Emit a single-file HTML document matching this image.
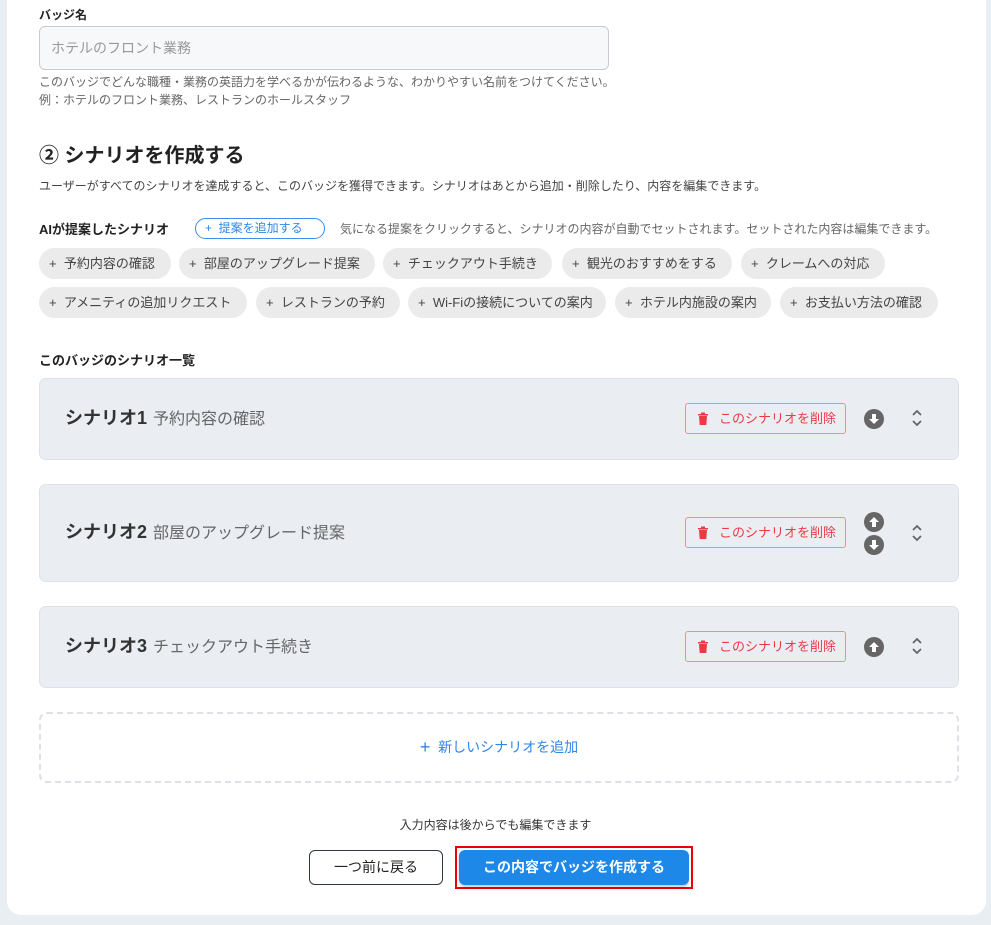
<!DOCTYPE html>
<html><head><meta charset="utf-8"><style>
*{box-sizing:border-box;margin:0;padding:0}
body{width:991px;height:925px;background:#e9eef3;font-family:"Liberation Sans","Noto Sans CJK JP",sans-serif;color:#222;position:relative;overflow:hidden}
.card{position:absolute;left:7px;top:-20px;width:979px;height:935px;background:#fff;border-radius:14px}
.a{position:absolute;white-space:nowrap}
.lbl{font-size:12px;font-weight:bold;color:#222}
.inp{left:39px;top:26px;width:570px;height:44px;background:#f7f8fa;border:1px solid #c8ccd2;border-radius:6px;font-size:14px;color:#999;padding:11px 11px}
.help{font-size:12px;color:#666}
.chip{position:absolute;height:31px;background:#ebebeb;border-radius:16px;font-size:13px;color:#444;line-height:31px;padding-left:10px;white-space:nowrap}
.sc{position:absolute;left:39px;width:920px;background:#eaeef3;border:1px solid #dde2e8;border-radius:7px}
.st{position:absolute;left:25px;font-size:18px;font-weight:bold;color:#333}
.st span{font-size:16px;font-weight:normal;color:#666;margin-left:6px}
.del{position:absolute;left:645px;width:161px;height:31px;border:1px solid #ee8f94;border-radius:3px;color:#ec3a45;font-size:13px;line-height:29px;padding-left:33px;background:#eaeef3}
.del svg{position:absolute;left:11px;top:8px}
.ic{position:absolute;left:824px}
.ud{position:absolute;left:872px}
</style></head><body>
<div class="card"></div>
<div class="a lbl" style="left:39px;top:6px">バッジ名</div>
<div class="a inp">ホテルのフロント業務</div>
<div class="a help" style="left:39px;top:73px">このバッジでどんな職種・業務の英語力を学べるかが伝わるような、わかりやすい名前をつけてください。</div>
<div class="a help" style="left:39px;top:91px">例：ホテルのフロント業務、レストランのホールスタッフ</div>
<div class="a" style="left:39px;top:139px;font-size:20px;font-weight:bold;color:#222">② シナリオを作成する</div>
<div class="a help" style="left:39px;top:177px;color:#444">ユーザーがすべてのシナリオを達成すると、このバッジを獲得できます。シナリオはあとから追加・削除したり、内容を編集できます。</div>
<div class="a" style="left:39px;top:219px;font-size:13px;font-weight:bold;color:#222">AIが提案したシナリオ</div>
<div class="a" style="left:195px;top:218px;width:130px;height:21px;border:1px solid #3d8ef0;border-radius:11px;color:#2f86e9;font-size:12px;line-height:19px;padding-left:9px">+&nbsp;&nbsp;提案を追加する</div>
<div class="a help" style="left:340px;top:220px">気になる提案をクリックすると、シナリオの内容が自動でセットされます。セットされた内容は編集できます。</div>
<div class="chip" style="left:39px;top:248px;width:132px">+&nbsp;&nbsp;予約内容の確認</div>
<div class="chip" style="left:179px;top:248px;width:196px">+&nbsp;&nbsp;部屋のアップグレード提案</div>
<div class="chip" style="left:383px;top:248px;width:169px">+&nbsp;&nbsp;チェックアウト手続き</div>
<div class="chip" style="left:562px;top:248px;width:170px">+&nbsp;&nbsp;観光のおすすめをする</div>
<div class="chip" style="left:741px;top:248px;width:144px">+&nbsp;&nbsp;クレームへの対応</div>
<div class="chip" style="left:39px;top:287px;width:208px">+&nbsp;&nbsp;アメニティの追加リクエスト</div>
<div class="chip" style="left:256px;top:287px;width:144px">+&nbsp;&nbsp;レストランの予約</div>
<div class="chip" style="left:408px;top:287px;width:198px">+&nbsp;&nbsp;Wi-Fiの接続についての案内</div>
<div class="chip" style="left:615px;top:287px;width:156px">+&nbsp;&nbsp;ホテル内施設の案内</div>
<div class="chip" style="left:780px;top:287px;width:158px">+&nbsp;&nbsp;お支払い方法の確認</div>
<div class="a" style="left:39px;top:350px;font-size:13px;font-weight:bold;color:#222">このバッジのシナリオ一覧</div>

<svg width="0" height="0" style="position:absolute"><defs>
<g id="tr"><path d="M1 2h10v1.5H1z M4 0.5h4v1.5H4z M2 4h8l-0.7 9H2.7z" fill="#ec3a45"/></g>
<g id="dn"><circle cx="10" cy="10" r="10" fill="#666"/><path d="M8 5h4v5h3l-5 5-5-5h3z" fill="#fff"/></g>
<g id="up"><circle cx="10" cy="10" r="10" fill="#666"/><path d="M8 15h4v-5h3l-5-5-5 5h3z" fill="#fff"/></g>
<g id="ud"><path d="M1 5l4-4 4 4M1 11l4 4 4-4" fill="none" stroke="#666" stroke-width="1.8"/></g>
</defs></svg>

<div class="sc" style="top:378px;height:82px">
<div class="st" style="top:25px">シナリオ1<span>予約内容の確認</span></div>
<div class="del" style="top:24px"><svg width="12" height="14"><use href="#tr"/></svg>このシナリオを削除</div>
<svg class="ic" style="top:30px" width="20" height="20"><use href="#dn"/></svg>
<svg class="ud" style="top:31px" width="10" height="16"><use href="#ud"/></svg>
</div>
<div class="sc" style="top:484px;height:98px">
<div class="st" style="top:33px">シナリオ2<span>部屋のアップグレード提案</span></div>
<div class="del" style="top:32px"><svg width="12" height="14"><use href="#tr"/></svg>このシナリオを削除</div>
<svg class="ic" style="top:27px" width="20" height="20"><use href="#up"/></svg>
<svg class="ic" style="top:50px" width="20" height="20"><use href="#dn"/></svg>
<svg class="ud" style="top:40px" width="10" height="16"><use href="#ud"/></svg>
</div>
<div class="sc" style="top:606px;height:82px">
<div class="st" style="top:25px">シナリオ3<span>チェックアウト手続き</span></div>
<div class="del" style="top:24px"><svg width="12" height="14"><use href="#tr"/></svg>このシナリオを削除</div>
<svg class="ic" style="top:30px" width="20" height="20"><use href="#up"/></svg>
<svg class="ud" style="top:31px" width="10" height="16"><use href="#ud"/></svg>
</div>

<div class="a" style="left:39px;top:712px;width:920px;height:71px;border:2px dashed #dde1e7;border-radius:8px;text-align:center;line-height:67px;color:#2f86e9;font-size:14px"><span style="font-size:18px;vertical-align:-1px">+</span>&nbsp;&nbsp;新しいシナリオを追加</div>
<div class="a" style="left:0;width:991px;top:816px;text-align:center;font-size:12px;color:#333">入力内容は後からでも編集できます</div>
<div class="a" style="left:309px;top:850px;width:134px;height:35px;border:1px solid #2f3646;border-radius:6px;text-align:center;line-height:33px;font-size:14px;color:#222">一つ前に戻る</div>
<div class="a" style="left:455px;top:846px;width:238px;height:43px;border:2px solid #e8000b"></div>
<div class="a" style="left:459px;top:850px;width:230px;height:35px;background:#1e88e8;border-radius:6px;text-align:center;line-height:35px;font-size:14px;font-weight:bold;color:#fff;box-shadow:0 2px 2px rgba(0,0,0,.2)">この内容でバッジを作成する</div>
</body></html>
